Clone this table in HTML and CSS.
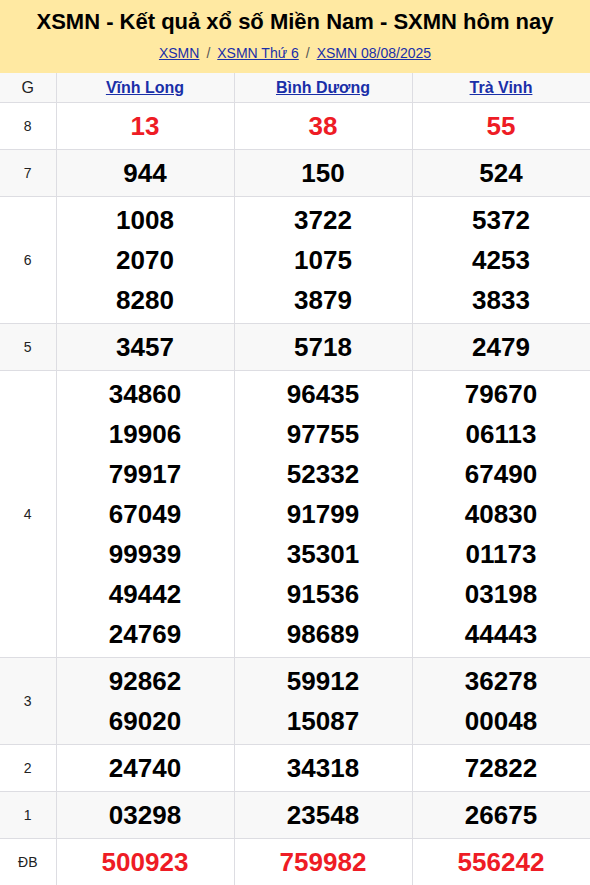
FILE: index.html
```html
<!DOCTYPE html>
<html lang="vi">
<head>
<meta charset="utf-8">
<title>XSMN</title>
<link rel="stylesheet" href="styles.css">
</head>
<body>
<div class="top">
  <h1 class="title">XSMN - Kết quả xổ số Miền Nam - SXMN hôm nay</h1>
  <div class="crumbs">
    <a href="#">XSMN</a><span class="sep">/</span><a href="#">XSMN Thứ 6</a><span class="sep">/</span><a href="#">XSMN 08/08/2025</a>
  </div>
</div>
<table class="kq">
  <colgroup><col class="c-g"><col class="c-p"><col class="c-p"><col class="c-p"></colgroup>
  <tr class="hd">
    <td class="g">G</td>
    <td><a href="#">Vĩnh Long</a></td>
    <td><a href="#">Bình Dương</a></td>
    <td><a href="#">Trà Vinh</a></td>
  </tr>
  <tr>
    <td class="g">8</td>
    <td class="n red"><div>13</div></td>
    <td class="n red"><div>38</div></td>
    <td class="n red"><div>55</div></td>
  </tr>
  <tr class="alt">
    <td class="g">7</td>
    <td class="n"><div>944</div></td>
    <td class="n"><div>150</div></td>
    <td class="n"><div>524</div></td>
  </tr>
  <tr>
    <td class="g">6</td>
    <td class="n"><div>1008</div><div>2070</div><div>8280</div></td>
    <td class="n"><div>3722</div><div>1075</div><div>3879</div></td>
    <td class="n"><div>5372</div><div>4253</div><div>3833</div></td>
  </tr>
  <tr class="alt">
    <td class="g">5</td>
    <td class="n"><div>3457</div></td>
    <td class="n"><div>5718</div></td>
    <td class="n"><div>2479</div></td>
  </tr>
  <tr>
    <td class="g">4</td>
    <td class="n"><div>34860</div><div>19906</div><div>79917</div><div>67049</div><div>99939</div><div>49442</div><div>24769</div></td>
    <td class="n"><div>96435</div><div>97755</div><div>52332</div><div>91799</div><div>35301</div><div>91536</div><div>98689</div></td>
    <td class="n"><div>79670</div><div>06113</div><div>67490</div><div>40830</div><div>01173</div><div>03198</div><div>44443</div></td>
  </tr>
  <tr class="alt">
    <td class="g">3</td>
    <td class="n"><div>92862</div><div>69020</div></td>
    <td class="n"><div>59912</div><div>15087</div></td>
    <td class="n"><div>36278</div><div>00048</div></td>
  </tr>
  <tr>
    <td class="g">2</td>
    <td class="n"><div>24740</div></td>
    <td class="n"><div>34318</div></td>
    <td class="n"><div>72822</div></td>
  </tr>
  <tr class="alt">
    <td class="g">1</td>
    <td class="n"><div>03298</div></td>
    <td class="n"><div>23548</div></td>
    <td class="n"><div>26675</div></td>
  </tr>
  <tr>
    <td class="g">ĐB</td>
    <td class="n red"><div>500923</div></td>
    <td class="n red"><div>759982</div></td>
    <td class="n red"><div>556242</div></td>
  </tr>
</table>
</body>
</html>
```
FILE: styles.css
```css
html, body {
  margin: 0;
  padding: 0;
  background: #fff;
  font-family: "Liberation Sans", Arial, sans-serif;
  color: #000;
}
.top {
  background: #ffe9a2;
  text-align: center;
  padding: 8px 0 10px;
}
.title {
  margin: 0;
  font-size: 22px;
  line-height: 28px;
  font-weight: bold;
  color: #000;
}
.crumbs {
  margin-top: 7px;
  font-size: 14px;
  line-height: 20px;
}
.crumbs a {
  color: #1a2fa8;
  text-decoration: underline;
}
.crumbs .sep {
  color: #555;
  margin: 0 7px;
}
.kq {
  width: 590px;
  border-collapse: collapse;
  table-layout: fixed;
}
.c-g { width: 56px; }
.c-p { width: 178px; }
.kq td {
  border: 1px solid #dddde2;
  text-align: center;
  vertical-align: middle;
  padding: 3px 0;
}
.kq tr:first-child td { border-top: none; }
.kq td:first-child { border-left: none; }
.hd td {
  background: #f8f8f8;
  height: 23px;
  padding: 3px 0;
  font-size: 16px;
  line-height: 23px;
}
.hd a {
  color: #1a2fa8;
  font-weight: bold;
  text-decoration: underline;
}
.g {
  font-size: 14px;
  color: #222;
}
.alt td { background: #f8f8f8; }
.n div {
  font-size: 26px;
  font-weight: bold;
  line-height: 40px;
}
.n.red div { color: #ee1c25; }
```
